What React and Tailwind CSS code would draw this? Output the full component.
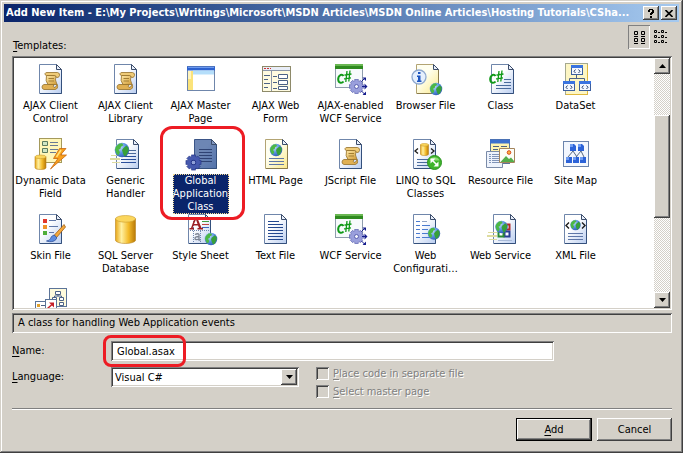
import { useState } from "react";

/* ---------- shared icon parts ---------- */

const TINTS = {
  blue: { a: "#ffffff", b: "#b9cdf0", line: "#6f86ab" },
  yellow: { a: "#fffff0", b: "#fbe98a", line: "#b3a473" },
  slate: { a: "#6d86b4", b: "#5474ac", line: "#3b5587" },
};

function Page({ x = 5, y = 1, tint = "blue" }) {
  const t = TINTS[tint];
  const id = `page-${tint}`;
  return (
    <g transform={`translate(${x} ${y})`}>
      <defs>
        <linearGradient id={id} x1="0.1" y1="0" x2="1" y2="1">
          <stop offset="0.35" stopColor={t.a} />
          <stop offset="1" stopColor={t.b} />
        </linearGradient>
      </defs>
      <path d="M.5.5h17l5 5v24h-22z" fill={`url(#${id})`} stroke={t.line} />
      <path d="M1 29.5h21.5V6" fill="none" stroke={tint === "yellow" ? "#8a7b4c" : "#34507c"} />
      <path d="M17.5.5v5h5z" fill={tint === "slate" ? "#8197c0" : "#e8effb"} stroke="#3c4d6b" />
    </g>
  );
}

function Lines({ x, y, w, n = 3, gap = 3, color = "#4a6b9c" }) {
  return Array.from({ length: n }, (_, i) => (
    <path key={i} d={`M${x} ${y + 0.5 + i * gap}h${w}`} stroke={color} />
  ));
}

function Scroll() {
  return (
    <g strokeLinejoin="round" strokeWidth=".8">
      <defs>
        <linearGradient id="parchment" x1="0" y1="0" x2="1" y2="1">
          <stop offset="0" stopColor="#ffe9a8" />
          <stop offset="1" stopColor="#d09a35" />
        </linearGradient>
      </defs>
      <path d="M12.500 12.500Q11 18 14 21.500h9Q20.500 17 22 12.500z" fill="url(#parchment)" stroke="#94702a" />
      <path d="M13 9.500h10.500q2.500.5 2 3-.5 2.500-3 2-.5-2-2-2h-8q-2-.5-1.500-2 .5-1 2-1z" fill="#efcb78" stroke="#94702a" />
      <path d="M10 21.500h10q-1.500 2 0 3 2 0 2.500-2l.8-1q1.200 4.500-2.300 5H10q-2-.5-2-2.500t2-2.500z" fill="#e0b053" stroke="#94702a" />
      <path d="M14.500 15.500h5.500M14.500 18h5.500" stroke="#a37f33" strokeWidth="1" />
    </g>
  );
}

function Globe({ x, y, r = 6 }) {
  return (
    <g transform={`translate(${x} ${y}) scale(${r / 7})`}>
      <defs>
        <radialGradient id="globe" cx="0.35" cy="0.3" r="0.8">
          <stop offset="0" stopColor="#c9e0fc" />
          <stop offset="0.5" stopColor="#5a93e4" />
          <stop offset="1" stopColor="#2a55ad" />
        </radialGradient>
      </defs>
      <circle r="7.300" fill="url(#globe)" />
      <path d="M-6-3.500l3-2.800 3-.5 1.500 2-2.500 1.500-.5 2-2 1 1.500 2.500-1.500 3-2-1.500-1.500-4z" fill="#4cb845" />
      <path d="M1.500-2l3-2.500 2 2.500v3L4.500 5 2.500 6.500 1 3.500 0 0z" fill="#37a03a" />
    </g>
  );
}

function Gear({ x, y, r = 7, fill = "#9a9fdc", stroke = "#5b61b0" }) {
  return (
    <g transform={`translate(${x} ${y}) scale(${r / 7})`}>
      {[0, 45, 90, 135].map((a) => (
        <rect key={a} x="-1.700" y="-7" width="3.400" height="14" fill={fill} stroke={stroke} strokeWidth=".7" transform={`rotate(${a})`} />
      ))}
      <circle r="5.500" fill={fill} />
      <circle r="2" fill="#f2f3fc" stroke={stroke} />
    </g>
  );
}

function Cylinder({ x, y, w, h }) {
  const rx = w / 2;
  const ry = Math.min(w / 6, 3.5);
  return (
    <g transform={`translate(${x} ${y})`}>
      <defs>
        <linearGradient id="cyl" x1="0" x2="1" y1="0" y2="0">
          <stop offset="0" stopColor="#e8a718" />
          <stop offset="0.3" stopColor="#fff0a0" />
          <stop offset="0.65" stopColor="#f3bb2a" />
          <stop offset="1" stopColor="#b87908" />
        </linearGradient>
      </defs>
      <path d={`M0 ${ry}V${h - ry}A${rx} ${ry} 0 0 0 ${w} ${h - ry}V${ry}z`} fill="url(#cyl)" stroke="#b98420" strokeWidth=".6" />
      <ellipse cx={rx} cy={ry} rx={rx} ry={ry} fill="#fbd65c" stroke="#c99a2c" strokeWidth=".6" />
    </g>
  );
}

function CSharp({ x, y }) {
  return (
    <g transform={`translate(${x} ${y})`} fill="none" stroke="#109a18">
      <path d="M6.500 5.500Q5.500 3.700 3.500 4.500 1 6 1.200 9t2.400 3.300Q5.500 12.500 6.500 11" strokeWidth="2" />
      <path d="M10 .5L8.800 11.500M13 0l-1.200 11M7.500 4.500l7-1M7 8.300l7-1" strokeWidth="1.300" />
    </g>
  );
}

function MiniWindow({ x, y }) {
  return (
    <g transform={`translate(${x} ${y})`}>
      <rect x=".5" y=".5" width="11" height="9" fill="#f4f8ff" stroke="#3c5f9e" />
      <path d="M0 1.500h12" stroke="#3a74e0" strokeWidth="3" />
      <path d="M4.500 4.500L3 6.300 4.500 8M7.500 4.500L9 6.300 7.500 8" fill="none" stroke="#27406e" />
    </g>
  );
}

/* ---------- template icons ---------- */

const ScriptIcon = () => (
  <>
    <Page />
    <Scroll />
  </>
);

const MasterIcon = () => (
  <>
    <rect x="3.500" y="3.500" width="27" height="24" fill="#fff" stroke="#6f86ab" />
    <path d="M3 5.500h28" stroke="#2e62cf" strokeWidth="4" />
    <path d="M4 4.500h26" stroke="#6d9bf0" />
    <path d="M9 9.500h21" stroke="#b5defa" strokeWidth="4" />
    <path d="M4 8h5v19H4z" fill="#fbe37a" />
    <path d="M4 8h3v8H4z" fill="#fff4bd" />
  </>
);

const WebFormIcon = () => (
  <>
    <rect x="3.500" y="3.500" width="28" height="25" fill="#fffbe0" stroke="#8e8a6a" />
    <path d="M4 5.500h27" stroke="#e8edf7" strokeWidth="3" />
    <path d="M5 5.500h7" stroke="#c33" strokeDasharray="2 1" />
    <path d="M4 7.500h27M12.500 8v20" stroke="#8a95a8" />
    <path d="M5 12.500h6M5 16.500h4M5 20.500h6M5 24.500h4M14 13.500h4M14 19.500h4M14 25.500h4" stroke="#4c6286" />
    <path d="M19.500 11.500h9v4h-9zM19.500 17.500h9v4h-9zM19.500 23.500h9v3h-9z" fill="#fff" stroke="#4c6286" />
  </>
);

const WcfIcon = () => (
  <>
    <rect x="1.500" y="1.500" width="27" height="23" fill="#f7fafc" stroke="#8f9dad" />
    <path d="M1 3.500h28" stroke="#2f8a1f" strokeWidth="5" />
    <path d="M1 2h28" stroke="#69b752" strokeWidth="2" />
    <CSharp x={3} y={7.500} />
    <Gear x={22.500} y={23.500} r={7} />
    <g stroke="#141c8c" fill="#141c8c">
      <path d="M27.500 18.500l3-3M28 23.500h4M27.500 28l3 3" />
      <path d="M28.500 14.500h3.500v3.500zM30.500 20.500l3 3-3 3zM28.500 32h3.500v-3.500z" stroke="none" />
    </g>
  </>
);

const BrowserIcon = () => (
  <>
    <Page x={7} y={1} tint="yellow" />
    <circle cx="10" cy="14" r="7" fill="#e6f0fd" stroke="#8fa9cf" strokeWidth="1.300" />
    <path d="M9 9h2.500v2H9zM8 12.500h3.500v5h1V19H8v-1.500h1V14H8z" fill="#1e56c0" />
    <Globe x={27} y={26} r={6} />
  </>
);

const ClassIcon = () => (
  <>
    <Page x={7} y={1} />
    <path d="M20 16.500h7M20 19.500h7M12 22.500h15M12 25.500h15" stroke="#4a6b9c" />
    <CSharp x={5} y={7.500} />
  </>
);

const DataSetIcon = () => (
  <>
    <rect x="6.500" y=".5" width="22" height="31" fill="#fdf6c4" stroke="#a5a98f" />
    <path d="M7 31.500h21.500V2" fill="none" stroke="#e0b83c" />
    <path d="M17.500 12v3M10.500 19v-3.500h15V19" fill="none" stroke="#4c6286" />
    <MiniWindow x={12} y={2} />
    <MiniWindow x={4} y={18} />
    <MiniWindow x={20} y={18} />
  </>
);

const DynamicIcon = () => (
  <>
    <rect x="5.500" y=".5" width="22" height="24" fill="#fff6b8" stroke="#a59a5c" />
    <path d="M8.500 3.500h5v4h-5zM8.500 10.500h5v4h-5z" fill="#cfe6c4" stroke="#5b7a5e" />
    <path d="M16 4.500h8M16 7.500h8M16 11.500h8M16 14.500h6" stroke="#6a7a94" />
    <Cylinder x={1} y={17} w={11} h={14.500} />
    <path d="M25.500 10.500L19.500 20.500h4.500L16.500 31l16-14h-6l5.500-6.500z" fill="#f8a01c" stroke="#c9670f" strokeWidth=".8" />
    <path d="M27 12l-4.500 7" fill="none" stroke="#ffe27a" strokeWidth="1.500" />
  </>
);

const SpeedLines = ({ x, y }) => (
  <g transform={`translate(${x} ${y})`} fill="#dedca0">
    <rect x="1" y="0" width="9" height="1" />
    <rect x="0" y="3" width="10" height="2" />
    <rect x="2" y="7" width="8" height="1" />
  </g>
);

const HandlerIcon = () => (
  <>
    <Page x={7} y={1} />
    <Lines x={17} y={12} w={10} n={2} />
    <Lines x={12} y={18} w={15} n={3} color="#2a4f9c" />
    <SpeedLines x={1} y={17} />
    <Globe x={13} y={12} r={7} />
  </>
);

const GlobalIcon = () => (
  <>
    <Page x={10} y={1} tint="slate" />
    <Lines x={15} y={11} w={13} n={5} color="#2f4373" />
    <Gear x={9.500} y={24.500} r={7.500} fill="#4659ae" stroke="#26378a" />
    <circle cx="9.500" cy="24.500" r="1.800" fill="#8fa0d8" />
  </>
);

const HtmlIcon = () => (
  <>
    <Page x={6} y={1} tint="yellow" />
    <Globe x={17} y={12} r={6} />
    <Lines x={10} y={20} w={15} n={3} color="#5f77a8" />
  </>
);

const LinqIcon = () => (
  <>
    <Page x={4} y={1} />
    <Lines x={8} y={21} w={12} n={3} gap={3} />
    <Cylinder x={11.500} y={5.500} w={8} h={12} />
    <path d="M9 10.500l-3 2.500 3 2.500M22 10.500l3 2.500-3 2.500" fill="none" stroke="#1c1c1c" strokeWidth="1.300" />
    <circle cx="25.500" cy="24.500" r="7" fill="#3fb52b" stroke="#2c9322" />
    <path d="M20.500 22.500a5.500 5.500 0 0 1 10 0z" fill="#8ddc74" />
    <path d="M23.500 22.500l4 4" stroke="#fff" strokeWidth="1.600" />
    <path d="M21.500 20.500h5l-5 5zM29.500 28.500h-5l5-5z" fill="#fff" />
  </>
);

const ResourceIcon = () => (
  <>
    <rect x="6.500" y="1.500" width="19" height="24" fill="#fff3b0" stroke="#5b7499" />
    <path d="M6 3.500h20" stroke="#3c70cf" strokeWidth="4" />
    <path d="M9 8.500h6M17 8.500h6M9 11.500h5" stroke="#4c6286" />
    <path d="M2.500 13.500h16v16h-16z" fill="#eef3fc" stroke="#7a8ba8" />
    <Lines x={5} y={16} w={11} n={5} gap={2} color="#8094b8" />
    <path d="M7.500 14v15" stroke="#eef3fc" />
    <path d="M15.500 10.500h15v14h-15z" fill="#fdfdf6" stroke="#a4845c" />
    <circle cx="25" cy="14.500" r="1.800" fill="#ffb43c" stroke="#d9471c" />
    <path d="M16.500 24l5.500-6 3 3 2-1.500 3 3.500v1z" fill="#55ad4a" />
  </>
);

const SiteMapIcon = () => (
  <>
    <rect x="4.500" y="3.500" width="25" height="25" fill="#f3f7fe" stroke="#6b84ad" />
    <path d="M14 13l-5 6M14 13l4 6M22 13l-5 6M22 13l3 6" stroke="#5a6a80" />
    <path d="M11 6h4l2 2v5h-6zM19 6h4l2 2v5h-6zM7 19h6v6H7zM14 19h6v6h-6zM21 19h6v6h-6z" fill="#2b62d8" />
    <path d="M11 6h3v3h-3zM19 6h3v3h-3zM7 19h3v3H7zM14 19h3v3h-3zM21 19h3v3h-3z" fill="#6f9cf2" />
  </>
);

const SkinIcon = () => (
  <>
    <Page />
    <path d="M9 6h4v4H9z" fill="#e2372b" />
    <path d="M9 12h4v4H9z" fill="#f0932b" />
    <path d="M9 18h4v4H9z" fill="#4fae3a" />
    <path d="M15 7.500h7M15 13.500h9M15 19.500h5" stroke="#5f77a8" />
    <path d="M30 11.500L20 22.500l2.500 2L31.500 14z" fill="#f5a83a" stroke="#a15f12" strokeWidth=".8" />
    <path d="M20 22q-3 1-3.500 3.500-.5 2-4 2.500 6 2 9.500-1.500 1-1.500.5-2.500z" fill="#5c8be0" stroke="#2f529a" strokeWidth=".8" />
  </>
);

const SqlIcon = () => <Cylinder x={6.500} y={2.500} w={20} h={28} />;

const StyleIcon = () => (
  <>
    <Page x={4} y={1} />
    <path d="M18 8.500h7" stroke="#3f9c45" />
    <path d="M18 11.500h7" stroke="#c04545" />
    <path d="M18 14.500h7" stroke="#3f68c0" />
    <path d="M6 17.500h19M9.500 4v25M16.500 18v11" stroke="#6d86b0" strokeDasharray="1 1" />
    <path d="M11 4h2l4.500 11H19v1.500h-5.500V15H15l-1-2.500H9.500L8.700 15H10v1.500H5.500V15H7zM12 6.500L10 11h3.500z" fill="#9c1f24" />
    <path d="M11 21.500q3-1.500 4 0v5.500h1.500M15 23.500q-4 0-4 2t4 .5" fill="none" stroke="#7c8494" strokeWidth="1.300" />
    <Globe x={27} y={26} r={6} />
  </>
);

const TextIcon = () => (
  <>
    <Page />
    <Lines x={9} y={8} w={11} n={1} color="#24488f" />
    <Lines x={9} y={11} w={15} n={6} color="#24488f" />
  </>
);

const ConfigIcon = () => (
  <>
    <Page x={4} y={1} />
    <path d="M7 8.500h4M7 12.500h4M7 16.500h4M7 20.500h4M7 24.500h4M13 12.500h8M13 16.500h6M13 20.500h6M13 24.500h10" stroke="#4a7bd0" />
    <path d="M13 8.500h5" stroke="#8fa3c4" />
    <Globe x={25} y={20.500} r={6} />
  </>
);

const WebServiceIcon = () => (
  <>
    <Page x={9} y={1} />
    <path d="M20.500 11.500h5v5h-5z" fill="#fff" stroke="#b22b2b" strokeWidth="2" />
    <path d="M20.500 18.500h5v5h-5z" fill="#fff" stroke="#2a3d94" strokeWidth="2" />
    <path d="M14.500 18.500h5v5h-5z" fill="#fff" stroke="#2b8a35" strokeWidth="2" />
    <path d="M14 27.500h14" stroke="#a7b9d8" />
    <SpeedLines x={3} y={19} />
    <Globe x={17.500} y={14} r={6} />
  </>
);

const XmlIcon = () => (
  <>
    <Page />
    <Globe x={16.500} y={12} r={5} />
    <path d="M10 9.500L7 12.500l3 3M23 9.500l3 3-3 3" fill="none" stroke="#1c1c1c" strokeWidth="1.400" />
    <Lines x={9} y={20} w={15} n={3} color="#5f77a8" />
  </>
);

const DiagramIcon = () => (
  <>
    <rect x="15.500" y=".5" width="17" height="18" fill="#fffbdc" stroke="#5b7499" />
    <path d="M21.500 3.500h5v3h-5zM18.500 9.500h4v3h-4zM25.500 9.500h4v3h-4zM25.500 14.500h4v3h-4zM24 7v1.500M20.500 9V8h7v1" fill="#fff" stroke="#4c6286" />
    <rect x="1.500" y="13.500" width="12" height="12" fill="#fff" stroke="#5b7499" />
    <path d="M3 16h3v3H3z" fill="#e0a12c" />
    <path d="M7 17.500h5" stroke="#4c6286" />
    <rect x="11.500" y="11.500" width="11" height="14" fill="#fff" stroke="#5b7499" />
    <path d="M13.500 20.500l4.500-4" stroke="#c62028" strokeWidth="1.500" />
    <path d="M15 14.500h5v5z" fill="#c62028" />
  </>
);

const TEMPLATES = [
  ["AJAX Client Control", ScriptIcon],
  ["AJAX Client Library", ScriptIcon],
  ["AJAX Master Page", MasterIcon],
  ["AJAX Web Form", WebFormIcon],
  ["AJAX-enabled WCF Service", WcfIcon],
  ["Browser File", BrowserIcon],
  ["Class", ClassIcon],
  ["DataSet", DataSetIcon],
  ["Dynamic Data Field", DynamicIcon],
  ["Generic Handler", HandlerIcon],
  ["Global Application Class", GlobalIcon],
  ["HTML Page", HtmlIcon],
  ["JScript File", ScriptIcon],
  ["LINQ to SQL Classes", LinqIcon],
  ["Resource File", ResourceIcon],
  ["Site Map", SiteMapIcon],
  ["Skin File", SkinIcon],
  ["SQL Server Database", SqlIcon],
  ["Style Sheet", StyleIcon],
  ["Text File", TextIcon],
  ["WCF Service", WcfIcon],
  ["Web Configurati…", ConfigIcon],
  ["Web Service", WebServiceIcon],
  ["XML File", XmlIcon],
  ["", DiagramIcon],
];

/* ---------- window chrome ---------- */

const RAISED =
  "bg-[#d4d0c8] shadow-[inset_-1px_-1px_0_#404040,inset_1px_1px_0_#fff,inset_-2px_-2px_0_#808080]";
const SUNKEN =
  "shadow-[inset_1px_1px_0_#808080,inset_-1px_-1px_0_#fff,inset_2px_2px_0_#404040,inset_-2px_-2px_0_#d4d0c8]";

function Mnemonic({ children }) {
  return <span className="underline underline-offset-2">{children}</span>;
}

function TitleBar() {
  return (
    <header className="flex h-[18px] items-center bg-linear-to-r from-[#0a246a] to-[#a6caf0] px-0.5">
      <h1 className="min-w-0 flex-1 truncate text-[11px] leading-4 font-bold text-white">
        Add New Item - E:\My Projects\Writings\Microsoft\MSDN Articles\MSDN Online Articles\Hosting Tutorials\CSha...
      </h1>
      <div className="flex gap-0.5">
        <button type="button" aria-label="Help" className={`flex h-3.5 w-4 items-center justify-center ${RAISED}`}>
          <svg width="6" height="9" viewBox="0 0 6 9">
            <path d="M0 1h1V0h4v1h1v3H5v1H4v1H2V4h1V3h1V1H2v2H0zM2 7h2v2H2z" />
          </svg>
        </button>
        <button type="button" aria-label="Close" className={`flex h-3.5 w-4 items-center justify-center ${RAISED}`}>
          <svg width="8" height="7" viewBox="0 0 8 7" stroke="#000" strokeWidth="1.600">
            <path d="M.5 0l7 7M7.500 0l-7 7" />
          </svg>
        </button>
      </div>
    </header>
  );
}

function Toolbar() {
  return (
    <div className="flex h-6 items-center">
      <button
        type="button"
        aria-label="Large icons"
        aria-pressed="true"
        className="flex h-6 w-[22px] items-center justify-center bg-[#d4d0c8] shadow-[inset_1px_1px_0_#808080,inset_-1px_-1px_0_#fff]"
      >
        <svg width="12" height="14" viewBox="0 0 12 14" fill="none" stroke="#000">
          <path d="M1.500 1.500h3v3h-3zM8.500 1.500h3v3h-3zM1.500 8.500h3v3h-3zM8.500 8.500h3v3h-3zM1 6.500h4M8 6.500h4M1 13.500h4M8 13.500h4" />
        </svg>
      </button>
      <button type="button" aria-label="Small icons" className="flex h-6 w-[22px] items-center justify-center">
        <svg width="14" height="14" viewBox="0 0 14 14" fill="none" stroke="#000">
          <path d="M.5.5h2v2h-2zM7.500.5h2v2h-2zM.5 5.500h2v2h-2zM7.500 5.500h2v2h-2zM.5 10.500h2v2h-2zM7.500 10.500h2v2h-2zM4 2.500h2M11 2.500h2M4 7.500h2M11 7.500h2M4 12.500h2M11 12.500h2" />
        </svg>
      </button>
    </div>
  );
}

function TemplateItem({ name, Icon, selected, onSelect }) {
  return (
    <li className="relative h-[75px]">
      <button type="button" aria-pressed={selected} onClick={onSelect} className="flex w-full flex-col items-center gap-1">
        <svg width="33" height="32" viewBox="0 0 33 32" className="shrink-0 overflow-visible">
          <Icon />
        </svg>
        {name && (
          <span
            className={
              selected
                ? "w-14 bg-[#0a246a] pb-px leading-[13px] text-white outline-1 -outline-offset-1 outline-dotted outline-[#f5db95]"
                : "w-[73px] leading-[13px]"
            }
          >
            {name}
          </span>
        )}
      </button>
      {selected && (
        <span className="pointer-events-none absolute -top-3 -left-[3px] z-10 h-[94px] w-[85px] rounded-xl border-3 border-[#ed1c24]" />
      )}
    </li>
  );
}

function ScrollButton({ label, d }) {
  return (
    <button type="button" aria-label={label} className={`flex h-4 w-4 shrink-0 items-center justify-center ${RAISED}`}>
      <svg width="7" height="4" viewBox="0 0 7 4">
        <path d={d} />
      </svg>
    </button>
  );
}

export default function App() {
  const [selected, setSelected] = useState("Global Application Class");
  const [name, setName] = useState("Global.asax");

  return (
    <main className="bg-[#d4d0c8] p-1 pb-3 font-['DejaVu_Sans_Condensed','DejaVu_Sans',sans-serif] text-[11px] leading-[13px] text-black shadow-[inset_-1px_-1px_0_#404040,inset_1px_1px_0_#d4d0c8,inset_-2px_-2px_0_#808080,inset_2px_2px_0_#fff]">
      <TitleBar />

      <div className="flex items-start justify-between px-[7px] pt-[3px]">
        <h2 id="templates" className="pt-3.5 pl-0.5">
          <Mnemonic>T</Mnemonic>emplates:
        </h2>
        <Toolbar />
      </div>

      <div className="px-2 pr-[7px]">
        <section aria-labelledby="templates" className={`mt-1 flex h-[254px] bg-white p-0.5 ${SUNKEN}`}>
          <ul className="-ml-px grid h-full min-w-0 flex-1 auto-rows-[75px] grid-cols-[repeat(auto-fill,75px)] overflow-hidden pt-[5px]">
            {TEMPLATES.map(([label, Icon], i) => (
              <TemplateItem
                key={i}
                name={label}
                Icon={Icon}
                selected={label === selected}
                onSelect={() => setSelected(label)}
              />
            ))}
          </ul>
          <div className="flex w-4 flex-col bg-[repeating-conic-gradient(#fff_0_25%,#d4d0c8_0_50%)] bg-size-[2px_2px]">
            <ScrollButton label="Scroll up" d="M3.500 0L7 4H0z" />
            <div className="h-[41px]" />
            <div className={`h-[103px] ${RAISED}`} />
            <div className="flex-1" />
            <ScrollButton label="Scroll down" d="M3.500 4L7 0H0z" />
          </div>
        </section>

        <p className="mt-[3px] h-5 pt-[3px] pl-[6px] shadow-[inset_1px_1px_0_#808080,inset_-1px_-1px_0_#fff,inset_2px_2px_0_#404040]">
          A class for handling Web Application events
        </p>

        <form className="mt-2" onSubmit={(e) => e.preventDefault()}>
          <div className="flex items-start">
            <label htmlFor="name" className="w-[99px] shrink-0 pt-[3px]">
              <Mnemonic>N</Mnemonic>ame:
            </label>
            <div className="relative w-full max-w-[443px]">
              <input
                id="name"
                value={name}
                onChange={(e) => setName(e.target.value)}
                className={`block h-5 w-full bg-white px-1.5 outline-none ${SUNKEN}`}
              />
              <span className="pointer-events-none absolute -top-1.5 -left-2 h-8 w-[83px] rounded-lg border-3 border-[#ed1c24]" />
            </div>
          </div>

          <div className="mt-1.5 flex items-start">
            <label htmlFor="language" className="w-[99px] shrink-0 pt-[3px]">
              <Mnemonic>L</Mnemonic>anguage:
            </label>
            <div className="relative w-[188px]">
              <select
                id="language"
                className={`block h-5 w-full appearance-none bg-white pr-5 pl-1 outline-none ${SUNKEN}`}
              >
                <option>Visual C#</option>
              </select>
              <span className={`pointer-events-none absolute top-0.5 right-0.5 flex h-4 w-4 items-center justify-center ${RAISED}`}>
                <svg width="7" height="4" viewBox="0 0 7 4">
                  <path d="M3.500 4L7 0H0z" />
                </svg>
              </span>
            </div>
            <div className="flex flex-col gap-[5px] pl-[17px] text-[#808080] [text-shadow:1px_1px_0_#fff]">
              <label className="flex items-center gap-1">
                <input type="checkbox" disabled className={`size-[13px] appearance-none ${SUNKEN}`} />
                <span>
                  <Mnemonic>P</Mnemonic>lace code in separate file
                </span>
              </label>
              <label className="flex items-center gap-1">
                <input type="checkbox" disabled className={`size-[13px] appearance-none ${SUNKEN}`} />
                <span>
                  <Mnemonic>S</Mnemonic>elect master page
                </span>
              </label>
            </div>
          </div>

          <hr className="mt-2.5 h-0.5 border-t border-b border-t-[#808080] border-b-white" />

          <div className="mt-2 flex justify-end gap-[5px]">
            <button
              type="submit"
              className="h-[23px] w-[76px] border border-black bg-[#d4d0c8] shadow-[inset_-1px_-1px_0_#404040,inset_1px_1px_0_#fff,inset_-2px_-2px_0_#808080]"
            >
              <Mnemonic>A</Mnemonic>dd
            </button>
            <button type="button" className={`h-[23px] w-[75px] ${RAISED}`}>
              Cancel
            </button>
          </div>
        </form>
      </div>
    </main>
  );
}
